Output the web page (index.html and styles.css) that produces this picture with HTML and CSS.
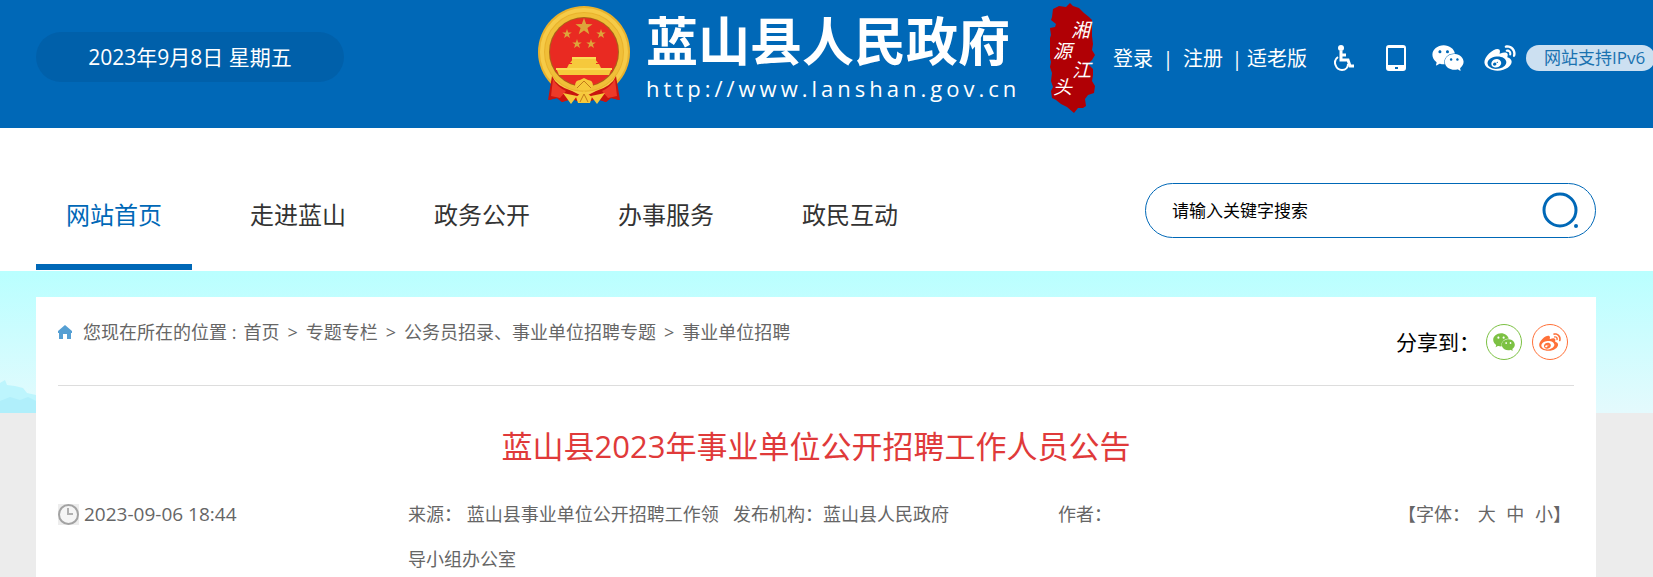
FILE: index.html
```html
<!DOCTYPE html>
<html lang="zh-CN">
<head>
    <meta charset="utf-8">
    <title>蓝山县2023年事业单位公开招聘工作人员公告</title>
    <link rel="stylesheet" href="styles.css">
</head>
<body>
    <svg class="sprite" aria-hidden="true">
        <symbol id="wechat" viewBox="0 2 24 20">
            <path d="M8.691 2.188C3.891 2.188 0 5.476 0 9.53c0 2.212 1.17 4.203 3.002 5.55a.59.59 0 0 1 .213.665l-.39 1.48c-.019.07-.048.141-.048.213 0 .163.13.295.29.295a.326.326 0 0 0 .167-.054l1.903-1.114a.864.864 0 0 1 .717-.098 10.16 10.16 0 0 0 2.837.403c.276 0 .543-.027.811-.05-.857-2.578.157-4.972 1.932-6.446 1.703-1.415 3.882-1.98 5.853-1.838-.576-3.583-4.196-6.348-8.596-6.348zM5.785 5.991c.642 0 1.162.529 1.162 1.18a1.17 1.17 0 0 1-1.162 1.178A1.17 1.17 0 0 1 4.623 7.17c0-.651.52-1.18 1.162-1.18zm5.813 0c.642 0 1.162.529 1.162 1.18a1.17 1.17 0 0 1-1.162 1.178 1.17 1.17 0 0 1-1.162-1.178c0-.651.52-1.18 1.162-1.18zm5.34 2.867c-1.797-.052-3.746.512-5.28 1.786-1.72 1.428-2.687 3.72-1.78 6.22.942 2.453 3.666 4.229 6.884 4.229.826 0 1.622-.12 2.361-.336a.722.722 0 0 1 .598.082l1.584.926a.272.272 0 0 0 .14.047c.134 0 .24-.111.24-.247 0-.06-.023-.12-.038-.177l-.327-1.233a.582.582 0 0 1-.023-.156.49.49 0 0 1 .201-.398C23.024 18.48 24 16.82 24 14.98c0-3.21-2.931-5.837-6.656-6.088V8.89c-.135-.01-.27-.027-.407-.03zm-2.53 3.274c.535 0 .969.44.969.982a.976.976 0 0 1-.969.983.976.976 0 0 1-.969-.983c0-.542.434-.982.97-.982zm4.844 0c.535 0 .969.44.969.982a.976.976 0 0 1-.969.983.976.976 0 0 1-.969-.983c0-.542.434-.982.969-.982z"/>
        </symbol>
        <symbol id="weibo" viewBox="0 2 24 20">
            <path d="M10.098 20.323c-3.977.391-7.414-1.406-7.672-4.02-.259-2.609 2.759-5.047 6.74-5.441 3.979-.394 7.413 1.404 7.671 4.018.259 2.6-2.759 5.049-6.737 5.439l-.002.004zM9.05 17.219c-.384.616-1.208.884-1.829.602-.612-.279-.793-.991-.406-1.593.379-.595 1.176-.861 1.793-.601.622.263.82.972.442 1.592zm1.27-1.627c-.141.237-.449.353-.689.253-.236-.09-.313-.361-.177-.586.138-.227.436-.346.672-.24.239.09.315.36.18.601l.014-.028zm.176-2.719c-1.893-.493-4.033.45-4.857 2.118-.836 1.704-.026 3.591 1.886 4.21 1.983.64 4.318-.341 5.132-2.179.8-1.793-.201-3.642-2.161-4.149zm7.563-1.224c-.346-.105-.57-.18-.405-.615.375-.977.42-1.804 0-2.404-.781-1.112-2.915-1.053-5.364-.03 0 0-.766.331-.571-.271.376-1.217.315-2.224-.27-2.809-1.338-1.337-4.869.045-7.888 3.08C1.309 10.87 0 13.273 0 15.348c0 3.981 5.099 6.395 10.086 6.395 6.536 0 10.888-3.801 10.888-6.82 0-1.822-1.547-2.854-2.915-3.284v.01zm1.908-5.092c-.766-.856-1.908-1.187-2.96-.962-.436.09-.706.511-.616.932.09.42.511.691.932.602.511-.105 1.067.044 1.442.465.376.421.466.977.316 1.473-.136.406.089.856.51.992.405.119.857-.105.992-.512.33-1.021.12-2.178-.646-3.035l.03.045zm2.418-2.195c-1.576-1.757-3.905-2.419-6.054-1.968-.496.104-.812.587-.706 1.081.104.496.586.813 1.082.707 1.532-.331 3.185.15 4.296 1.383 1.112 1.246 1.429 2.943.947 4.416-.165.48.106 1.007.586 1.157.479.165.991-.104 1.157-.586.675-2.088.241-4.478-1.338-6.235l.03.045z"/>
        </symbol>
        <symbol id="star" viewBox="-10 -10 20 20">
            <path d="M0-10 2.4-3.2 9.5-3.1 3.8 1.2 5.9 8.1 0 4-5.9 8.1-3.8 1.2-9.5-3.1-2.4-3.2z"/>
        </symbol>
    </svg>

    <header class="header">
        <div class="date-wrap">
            <div class="date">2023年9月8日 星期五</div>
        </div>
        <a class="logo" href="#">
            <svg class="emblem" viewBox="0 0 92 98" aria-hidden="true">
                <path fill="#c8140f" d="M15 66 11 94l8-2 5 4 10-3 12 4 12-4 10 3 5-4 8 2-4-28z"/>
                <circle cx="46" cy="46" r="46" fill="#e9b22c"/>
                <circle cx="46" cy="46" r="42" fill="none" stroke="#f6cb48" stroke-width="4"/>
                <circle cx="46" cy="46" r="37" fill="none" stroke="#f0bf38" stroke-width="4"/>
                <circle cx="46" cy="46" r="35" fill="#a9601a"/>
                <circle cx="46" cy="46" r="34" fill="#e92a22"/>
                <path fill="#c8140f" d="M14 70q4 10 20 15l12 6 12-6q16-5 20-15l4 24-9-2-5 4-9-3-13 4-13-4-9 3-5-4-9 2z"/>
                <path fill="#ed3a28" d="M15 73q4 8 13 12l-6 7-9-2zM77 73q-4 8-13 12l6 7 9-2z"/>
                <path fill="#f6c93c" d="M18 62h56l-3 7H21zM31 58h30l2 4H29zM34 52h24v6H34zM32 57l3-4h22l3 4z"/>
                <path fill="#fbdc55" d="M34 51h24v2H34zM18 62h56v2H18z"/>
                <path fill="#f6c93c" d="M37 80q0-6 5-6l4-2 4 2q5 0 5 6l-4 4H41zM25 87l14 3-6 8zM67 87l-14 3 6 8zM46 85l8 6-2 6H40l-2-6z"/>
                <path stroke="#c27a1a" stroke-width="1" fill="none" d="M39 82l7-7 7 7M42 96l4-8 4 8"/>
                <g fill="#dda53a">
                    <use href="#star" x="37" y="12" width="18" height="18"/>
                    <use href="#star" x="24" y="23" width="10" height="10"/>
                    <use href="#star" x="58" y="23" width="10" height="10"/>
                    <use href="#star" x="34" y="33" width="10" height="10"/>
                    <use href="#star" x="48" y="33" width="10" height="10"/>
                </g>
            </svg>
            <span class="logo-text">
                <strong class="site-name">蓝山县人民政府</strong>
                <span class="site-url">http://www.lanshan.gov.cn</span>
            </span>
        </a>
        <svg class="seal" viewBox="0 0 46 110" role="img" aria-label="湘源江头">
            <path fill="#b00005" d="M3 6l6-3 7 1 4-4 3 3 6 2 5 5 5 4 3 3 0 8 0 8 1 8-1 6 3 5-3 5-4 4 5 5 0 6-1 6 3 5-1 7-6 2-3 4 1 7-3 2-5 0-4 5-7-6-6-3-5-4-4-2-1-7 2-4-2-6 1-8-2-6 1-5-2-8 1-6-1-7 2-6-1-7 5-1 1-3-5-4 1-3z"/>
            <g class="seal-text">
                <text x="21" y="34">湘</text>
                <text x="3" y="55">源</text>
                <text x="22" y="74">江</text>
                <text x="3" y="91">头</text>
            </g>
        </svg>
        <div class="user-links">
            <a href="#">登录</a>
            <span class="bar wide">|</span>
            <a href="#">注册</a>
            <span class="bar">|</span>
            <a href="#">适老版</a>
        </div>
        <div class="tools">
            <a href="#" aria-label="无障碍">
                <svg width="20" height="26" viewBox="0 0 20 26">
                    <circle cx="7" cy="3" r="3" fill="#fff"/>
                    <path fill="none" stroke="#fff" stroke-width="3" d="M7 6v9h7l2 6h4M7 10h5"/>
                    <path fill="none" stroke="#fff" stroke-width="2" d="M4 12c-6 4-2 13 4 13 4 0 6-3 6-6"/>
                </svg>
            </a>
            <a href="#" aria-label="手机版">
                <svg width="20" height="26" viewBox="0 0 20 26">
                    <path fill="#fff" fill-rule="evenodd" d="M3 0h14a3 3 0 0 1 3 3v20a3 3 0 0 1-3 3H3a3 3 0 0 1-3-3V3a3 3 0 0 1 3-3zm-1 3v17h16V3zm7 19v2h3v-2z"/>
                </svg>
            </a>
            <a href="#" aria-label="微信"><svg class="social"><use href="#wechat"/></svg></a>
            <a href="#" aria-label="微博"><svg class="social"><use href="#weibo"/></svg></a>
        </div>
        <a class="ipv6" href="#">网站支持IPv6</a>
    </header>

    <div class="nav-bar">
        <nav class="nav">
            <a class="active" href="#">网站首页</a>
            <a href="#">走进蓝山</a>
            <a href="#">政务公开</a>
            <a href="#">办事服务</a>
            <a href="#">政民互动</a>
        </nav>
        <form class="search">
            <input type="text" aria-label="搜索" placeholder="请输入关键字搜索">
            <button type="button" aria-label="搜索">
                <svg width="38" height="38" viewBox="0 0 38 38">
                    <circle cx="18" cy="18" r="16" fill="none" stroke="#0068b7" stroke-width="3"/>
                    <circle cx="34" cy="34" r="2" fill="#0068b7"/>
                </svg>
            </button>
        </form>
    </div>

    <main class="main">
        <svg class="trees" viewBox="0 0 36 36" aria-hidden="true">
            <path fill="#bdf5fd" d="M0 6l5-3 2 5 8 1 8 2 4 5 9 2v18H0z"/>
            <path fill="#b0effb" d="M0 24l10-4 10 3 8-3 8 4v12H0z"/>
        </svg>
        <article class="card">
            <div class="card-top">
                <div class="crumbs">
                    <svg class="home" viewBox="0 0 14 14" aria-hidden="true">
                        <path fill="#559fd3" d="M7 0l7 6v2h-1v6H9V9H5v5H1V8H0V6z"/>
                    </svg>
                    <span class="crumb-label">您现在所在的位置 :</span>
                    <a href="#">首页</a><i>&gt;</i><a href="#">专题专栏</a><i>&gt;</i><a href="#">公务员招录、事业单位招聘专题</a><i>&gt;</i><a href="#">事业单位招聘</a>
                </div>
                <div class="share">
                    <span class="share-label">分享到：</span>
                    <a class="wechat" href="#" aria-label="微信"><svg><use href="#wechat"/></svg></a>
                    <a class="weibo" href="#" aria-label="微博"><svg><use href="#weibo"/></svg></a>
                </div>
            </div>
            <h1>蓝山县2023年事业单位公开招聘工作人员公告</h1>
            <ul class="meta">
                <li class="time">
                    <svg class="clock" viewBox="0 0 21 21" aria-hidden="true">
                        <path fill="#ededed" d="M0 0h21v21H0z"/>
                        <circle cx="10.5" cy="10.5" r="9.5" fill="#f5f5f5" stroke="#a3a3a3" stroke-width="2"/>
                        <path fill="none" stroke="#b0b0b0" stroke-width="2" d="M10 4v6h5"/>
                    </svg>
                    <span>2023-09-06 18:44</span>
                </li>
                <li>来源： 蓝山县事业单位公开招聘工作领导小组办公室</li>
                <li>发布机构：蓝山县人民政府</li>
                <li>作者：</li>
                <li class="font-size">【字体： <a href="#">大</a> <a href="#">中</a> <a href="#">小</a>】</li>
            </ul>
        </article>
    </main>
</body>
</html>
```
FILE: styles.css
```css
* {
    box-sizing: border-box;
}

body {
    margin: 0;
    min-height: 100vh;
    display: flex;
    flex-direction: column;
    background: #ececec;
    color: #666;
    font-family: "Open Sans", "Noto Sans CJK SC", sans-serif;
    font-size: 18px;
}

a {
    color: inherit;
    text-decoration: none;
}

svg {
    display: block;
}

.sprite {
    position: absolute;
    width: 0;
    height: 0;
}

/* header */
.header {
    display: flex;
    align-items: flex-start;
    height: 128px;
    padding-left: 36px;
    background: #0068b7;
    color: #fff;
    white-space: nowrap;
    overflow: hidden;
}

.date-wrap {
    flex: 1;
    padding-top: 32px;
}

.date {
    width: 308px;
    border-radius: 25px;
    background: #0060aa;
    font-size: 21px;
    line-height: 50px;
    text-align: center;
}

.logo {
    display: flex;
    gap: 16px;
    width: 512px;
    padding-top: 6px;
}

.emblem {
    width: 92px;
    height: 98px;
}

.logo-text {
    display: flex;
    flex-direction: column;
    margin-top: -5px;
}

.site-name {
    font-family: "Noto Sans CJK SC", sans-serif;
    font-size: 52px;
    line-height: 76px;
}

.site-url {
    font-size: 22px;
    line-height: 22px;
    letter-spacing: 4px;
}

.seal {
    width: 46px;
    height: 110px;
    margin-top: 3px;
}

.seal-text {
    fill: #fff;
    font-size: 19px;
    font-style: italic;
}

.user-links {
    display: flex;
    width: 205px;
    margin-left: 17px;
    padding-top: 44px;
    font-size: 20px;
    line-height: 30px;
}

.bar {
    width: 24px;
    padding-left: 4px;
    text-align: center;
}

.bar.wide {
    width: 30px;
    padding-left: 0;
}

.tools {
    display: flex;
    padding-top: 45px;
}

.tools a {
    width: 52px;
    display: flex;
    justify-content: center;
}

.social {
    width: 32px;
    height: 26px;
    fill: #fff;
}

.ipv6 {
    width: 129px;
    margin: 45px -2px 0 0;
    padding-left: 18px;
    border-radius: 13px;
    background: #cce0f1;
    color: #1a72b0;
    font-size: 17px;
    line-height: 26px;
}

/* nav */
.nav-bar {
    display: flex;
    justify-content: space-between;
    align-items: flex-start;
    padding: 38px 57px 1px 36px;
    background: #fff;
}

.nav {
    display: flex;
    gap: 28px;
}

.nav a {
    padding: 0 30px;
    border-bottom: 6px solid transparent;
    color: #333;
    font-size: 24px;
    line-height: 98px;
    white-space: nowrap;
}

.nav a.active {
    border-color: #0068b7;
    color: #0068b7;
}

.search {
    display: flex;
    align-items: center;
    width: 451px;
    height: 55px;
    margin-top: 17px;
    padding: 0 15px 0 26px;
    border: 1px solid #0068b7;
    border-radius: 28px;
}

.search input {
    flex: 1;
    min-width: 0;
    padding: 0;
    border: 0;
    outline: none;
    background: none;
    font-family: inherit;
    font-size: 17px;
}

.search input::placeholder {
    color: #000;
}

.search button {
    padding: 0;
    border: 0;
    background: none;
    cursor: pointer;
}

/* article */
.main {
    position: relative;
    flex: 1;
    display: flex;
    padding: 26px 57px 0 36px;
    background: linear-gradient(#b9ffff, #e4fafd) top / 100% 142px no-repeat;
}

.trees {
    position: absolute;
    left: 0;
    top: 106px;
    width: 36px;
    height: 36px;
}

.card {
    flex: 1;
    padding: 0 22px;
    background: #fff;
}

.card-top {
    display: flex;
    justify-content: space-between;
    align-items: flex-start;
    height: 89px;
    border-bottom: 1px solid #ddd;
}

.crumbs {
    display: flex;
    align-items: center;
    padding-top: 20px;
    line-height: 30px;
    white-space: nowrap;
}

.home {
    width: 14px;
    height: 14px;
    margin-right: 11px;
}

.crumb-label {
    margin-right: 7px;
}

.crumbs i {
    margin: 0 8px;
    font-style: normal;
}

.share {
    display: flex;
    align-items: center;
    gap: 10px;
    padding: 27px 6px 0 0;
    color: #000;
    font-size: 21px;
    line-height: 36px;
}

.share-label {
    margin-right: -4px;
}

.share a {
    display: flex;
    align-items: center;
    justify-content: center;
    width: 36px;
    height: 36px;
    border: 1px solid;
    border-radius: 50%;
}

.share svg {
    width: 22px;
    height: 18px;
    fill: currentColor;
}

.share .wechat {
    color: #7cc143;
}

.share .weibo {
    color: #ff7139;
}

.card h1 {
    margin: 30px 0 16px;
    color: #e03a3a;
    font-size: 31px;
    font-weight: normal;
    line-height: 60px;
    text-align: center;
}

.meta {
    display: grid;
    grid-template-columns: 350fr 325fr 325fr 240fr 276fr;
    margin: 0;
    padding: 0;
    list-style: none;
    line-height: 45px;
}

.time {
    display: flex;
    gap: 5px;
    font-size: 19px;
}

.clock {
    width: 21px;
    height: 21px;
    margin-top: 12px;
}

.font-size {
    padding-right: 3px;
    text-align: right;
}

.font-size a {
    margin: 0 3px;
}

.font-size a:last-child {
    margin-right: 0;
}
```
